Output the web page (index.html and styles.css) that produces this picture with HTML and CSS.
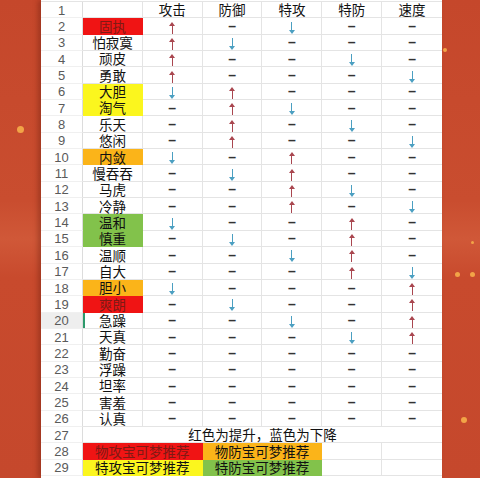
FILE: index.html
```html
<!DOCTYPE html>
<html lang="zh">
<head>
<meta charset="utf-8">
<link rel="stylesheet" href="styles.css">
</head>
<body>
<div class="page">
  <span class="dot d1"></span>
  <span class="dot d2"></span>
  <span class="dot d3"></span>
  <span class="dot d4"></span>
  <span class="dot d5"></span>
  <span class="dot d6"></span>
  <div class="sheet">
    <div class="top"></div>

    <div class="n">1</div><div class="c"></div><div class="c h">攻击</div><div class="c h">防御</div><div class="c h">特攻</div><div class="c h">特防</div><div class="c h last">速度</div>

    <div class="n">2</div><div class="c nm red">固执</div><div class="c"><i class="up"></i></div><div class="c">–</div><div class="c"><i class="dn"></i></div><div class="c">–</div><div class="c last">–</div>
    <div class="n">3</div><div class="c nm">怕寂寞</div><div class="c"><i class="up"></i></div><div class="c"><i class="dn"></i></div><div class="c">–</div><div class="c">–</div><div class="c last">–</div>
    <div class="n">4</div><div class="c nm">顽皮</div><div class="c"><i class="up"></i></div><div class="c">–</div><div class="c">–</div><div class="c"><i class="dn"></i></div><div class="c last">–</div>
    <div class="n">5</div><div class="c nm">勇敢</div><div class="c"><i class="up"></i></div><div class="c">–</div><div class="c">–</div><div class="c">–</div><div class="c last"><i class="dn"></i></div>
    <div class="n">6</div><div class="c nm yel">大胆</div><div class="c"><i class="dn"></i></div><div class="c"><i class="up"></i></div><div class="c">–</div><div class="c">–</div><div class="c last">–</div>
    <div class="n">7</div><div class="c nm yel">淘气</div><div class="c">–</div><div class="c"><i class="up"></i></div><div class="c"><i class="dn"></i></div><div class="c">–</div><div class="c last">–</div>
    <div class="n">8</div><div class="c nm">乐天</div><div class="c">–</div><div class="c"><i class="up"></i></div><div class="c">–</div><div class="c"><i class="dn"></i></div><div class="c last">–</div>
    <div class="n">9</div><div class="c nm">悠闲</div><div class="c">–</div><div class="c"><i class="up"></i></div><div class="c">–</div><div class="c">–</div><div class="c last"><i class="dn"></i></div>
    <div class="n">10</div><div class="c nm org">内敛</div><div class="c"><i class="dn"></i></div><div class="c">–</div><div class="c"><i class="up"></i></div><div class="c">–</div><div class="c last">–</div>
    <div class="n">11</div><div class="c nm">慢吞吞</div><div class="c">–</div><div class="c"><i class="dn"></i></div><div class="c"><i class="up"></i></div><div class="c">–</div><div class="c last">–</div>
    <div class="n">12</div><div class="c nm">马虎</div><div class="c">–</div><div class="c">–</div><div class="c"><i class="up"></i></div><div class="c"><i class="dn"></i></div><div class="c last">–</div>
    <div class="n">13</div><div class="c nm">冷静</div><div class="c">–</div><div class="c">–</div><div class="c"><i class="up"></i></div><div class="c">–</div><div class="c last"><i class="dn"></i></div>
    <div class="n">14</div><div class="c nm grn">温和</div><div class="c"><i class="dn"></i></div><div class="c">–</div><div class="c">–</div><div class="c"><i class="up"></i></div><div class="c last">–</div>
    <div class="n">15</div><div class="c nm grn">慎重</div><div class="c">–</div><div class="c"><i class="dn"></i></div><div class="c">–</div><div class="c"><i class="up"></i></div><div class="c last">–</div>
    <div class="n">16</div><div class="c nm">温顺</div><div class="c">–</div><div class="c">–</div><div class="c"><i class="dn"></i></div><div class="c"><i class="up"></i></div><div class="c last">–</div>
    <div class="n">17</div><div class="c nm">自大</div><div class="c">–</div><div class="c">–</div><div class="c">–</div><div class="c"><i class="up"></i></div><div class="c last"><i class="dn"></i></div>
    <div class="n">18</div><div class="c nm org">胆小</div><div class="c"><i class="dn"></i></div><div class="c">–</div><div class="c">–</div><div class="c">–</div><div class="c last"><i class="up"></i></div>
    <div class="n">19</div><div class="c nm red">爽朗</div><div class="c">–</div><div class="c"><i class="dn"></i></div><div class="c">–</div><div class="c">–</div><div class="c last"><i class="up"></i></div>
    <div class="n sel">20</div><div class="c nm selcell">急躁</div><div class="c">–</div><div class="c">–</div><div class="c"><i class="dn"></i></div><div class="c">–</div><div class="c last"><i class="up"></i></div>
    <div class="n">21</div><div class="c nm">天真</div><div class="c">–</div><div class="c">–</div><div class="c">–</div><div class="c"><i class="dn"></i></div><div class="c last"><i class="up"></i></div>
    <div class="n">22</div><div class="c nm">勤奋</div><div class="c">–</div><div class="c">–</div><div class="c">–</div><div class="c">–</div><div class="c last">–</div>
    <div class="n">23</div><div class="c nm">浮躁</div><div class="c">–</div><div class="c">–</div><div class="c">–</div><div class="c">–</div><div class="c last">–</div>
    <div class="n">24</div><div class="c nm">坦率</div><div class="c">–</div><div class="c">–</div><div class="c">–</div><div class="c">–</div><div class="c last">–</div>
    <div class="n">25</div><div class="c nm">害羞</div><div class="c">–</div><div class="c">–</div><div class="c">–</div><div class="c">–</div><div class="c last">–</div>
    <div class="n">26</div><div class="c nm">认真</div><div class="c">–</div><div class="c">–</div><div class="c">–</div><div class="c">–</div><div class="c last">–</div>

    <div class="n">27</div><div class="c nm note">红色为提升，蓝色为下降</div>
    <div class="n">28</div><div class="c nm span2 red">物攻宝可梦推荐</div><div class="c nm span2 org">物防宝可梦推荐</div><div class="c"></div><div class="c last"></div>
    <div class="n">29</div><div class="c nm span2 yel">特攻宝可梦推荐</div><div class="c nm span2 grn">特防宝可梦推荐</div><div class="c"></div><div class="c last"></div>
  </div>
</div>
</body>
</html>
```
FILE: styles.css
```css
html, body {
  margin: 0;
  padding: 0;
}
body {
  width: 480px;
  height: 478px;
  overflow: hidden;
  background: #c74a2c;
}
.page {
  position: relative;
  width: 480px;
  height: 478px;
  background: linear-gradient(180deg, #c5472b 0%, #c94d2f 42%, #d05838 50%, #c84a2d 58%, #c5482c 100%);
  display: flex;
}
.sheet {
  margin-left: 41px;
  width: 401px;
  height: 478px;
  background: #fff;
  box-shadow: -3px 0 5px rgba(90, 20, 10, 0.35);
  display: grid;
  grid-template-columns: 42px repeat(6, 1fr);
  grid-template-rows: 2px repeat(29, 16.35px) 1fr;
  font-family: "Noto Sans CJK SC", "Noto Sans", sans-serif;
  color: #1a1a1a;
}
.top {
  grid-column: 1 / -1;
  border-bottom: 1px solid #e4e4e4;
  box-sizing: border-box;
}
.n {
  font-family: "Liberation Sans", Arial, sans-serif;
  font-size: 13px;
  line-height: 1;
  color: #5a5a5a;
  display: flex;
  align-items: center;
  justify-content: center;
  border-right: 1px solid #dcdcdc;
  border-bottom: 1px solid #f0f0f0;
  box-sizing: border-box;
  padding-top: 1px;
}
.n.sel {
  background: #eeeeee;
}
.c {
  display: flex;
  align-items: center;
  justify-content: center;
  border-right: 1px solid #e4e4e4;
  border-bottom: 1px solid #e4e4e4;
  box-sizing: border-box;
  font-family: "Liberation Sans", Arial, sans-serif;
  font-weight: 700;
  font-size: 14px;
  line-height: 1;
  color: #333333;
}
.c.last {
  border-right: none;
}
.h, .nm {
  font-family: "Noto Sans CJK SC", "Noto Sans", sans-serif;
  font-weight: 400;
  font-size: 13.5px;
  line-height: 1;
  color: #111111;
  padding-top: 1px;
}
.red {
  background: #f01414;
  color: #7e1a14;
  border-color: transparent;
}
.yel {
  background: #fbf61e;
  border-color: transparent;
}
.org {
  background: #fbb419;
  border-color: transparent;
}
.grn {
  background: #82c24b;
  border-color: transparent;
}
.selcell {
  box-shadow: inset 2px 0 0 #2e9a6c;
}
.note {
  grid-column: span 6;
  border-right: none;
}
.span2 {
  grid-column: span 2;
}
.up, .dn {
  position: relative;
  display: block;
  width: 6px;
  height: 12px;
  margin-top: 3px;
}
.up::before, .dn::before {
  content: "";
  position: absolute;
  left: 2.5px;
  width: 1px;
}
.up::after, .dn::after {
  content: "";
  position: absolute;
  left: 0;
  border-left: 3px solid transparent;
  border-right: 3px solid transparent;
}
.up::before {
  top: 3px;
  bottom: 0;
  background: #a9464f;
}
.up::after {
  top: 0;
  border-bottom: 4px solid #a9464f;
}
.dn::before {
  top: 0;
  bottom: 3px;
  background: #4b9fc1;
}
.dn::after {
  bottom: 0;
  border-top: 4px solid #4b9fc1;
}
.dot {
  position: absolute;
  border-radius: 50%;
  background: #f2a447;
}
.d1 { left: 17px; top: 126px; width: 7px; height: 7px; }
.d2 { left: 443px; top: 48px; width: 4px; height: 4px; }
.d3 { left: 471px; top: 241px; width: 3px; height: 3px; }
.d4 { left: 455px; top: 272px; width: 5px; height: 5px; }
.d5 { left: 470px; top: 272px; width: 5px; height: 5px; }
.d6 { left: 461px; top: 417px; width: 6px; height: 6px; }
```
